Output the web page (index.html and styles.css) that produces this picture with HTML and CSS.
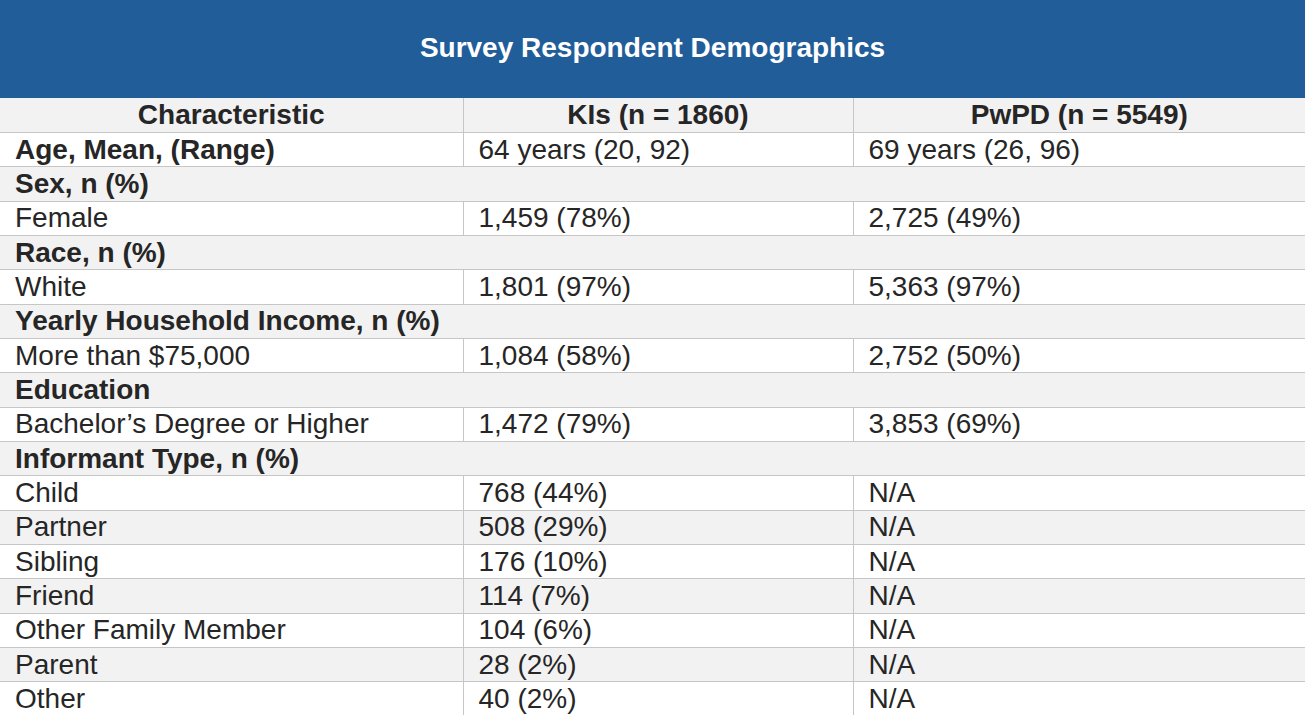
FILE: index.html
```html
<!DOCTYPE html>
<html lang="en">
<head>
<meta charset="utf-8">
<title>Survey Respondent Demographics</title>
<link rel="stylesheet" href="styles.css">
</head>
<body>
<div class="page">
  <header class="banner"><h1 class="banner-title">Survey Respondent Demographics</h1></header>
  <table class="demo">
    <colgroup><col class="c1"><col class="c2"><col class="c3"></colgroup>
    <thead>
      <tr class="head"><th>Characteristic</th><th>KIs (n = 1860)</th><th>PwPD (n = 5549)</th></tr>
    </thead>
    <tbody>
      <tr class="w"><td class="b">Age, Mean, (Range)</td><td>64 years (20, 92)</td><td>69 years (26, 96)</td></tr>
      <tr class="g"><td class="b" colspan="3">Sex, n (%)</td></tr>
      <tr class="w"><td>Female</td><td>1,459 (78%)</td><td>2,725 (49%)</td></tr>
      <tr class="g"><td class="b" colspan="3">Race, n (%)</td></tr>
      <tr class="w"><td>White</td><td>1,801 (97%)</td><td>5,363 (97%)</td></tr>
      <tr class="g"><td class="b" colspan="3">Yearly Household Income, n (%)</td></tr>
      <tr class="w"><td>More than $75,000</td><td>1,084 (58%)</td><td>2,752 (50%)</td></tr>
      <tr class="g"><td class="b" colspan="3">Education</td></tr>
      <tr class="w"><td>Bachelor’s Degree or Higher</td><td>1,472 (79%)</td><td>3,853 (69%)</td></tr>
      <tr class="g"><td class="b" colspan="3">Informant Type, n (%)</td></tr>
      <tr class="w"><td>Child</td><td>768 (44%)</td><td>N/A</td></tr>
      <tr class="g"><td>Partner</td><td>508 (29%)</td><td>N/A</td></tr>
      <tr class="w"><td>Sibling</td><td>176 (10%)</td><td>N/A</td></tr>
      <tr class="g"><td>Friend</td><td>114 (7%)</td><td>N/A</td></tr>
      <tr class="w"><td>Other Family Member</td><td>104 (6%)</td><td>N/A</td></tr>
      <tr class="g"><td>Parent</td><td>28 (2%)</td><td>N/A</td></tr>
      <tr class="w"><td>Other</td><td>40 (2%)</td><td>N/A</td></tr>
    </tbody>
  </table>
</div>
</body>
</html>
```
FILE: styles.css
```css
html, body {
  margin: 0;
  padding: 0;
  background: #ffffff;
}
body {
  font-family: "Liberation Sans", Arial, sans-serif;
  color: #262626;
  overflow: hidden;
}
.page {
  width: 1305px;
}
.banner {
  height: 98px;
  background: #215d99;
  display: flex;
  align-items: center;
  justify-content: center;
}
.banner-title {
  margin: 0;
  color: #ffffff;
  font-size: 28px;
  font-weight: 700;
  line-height: 1;
  transform: translateY(-1px);
}
.demo {
  width: 1305px;
  border-collapse: collapse;
  table-layout: fixed;
  font-size: 28px;
}
.c1 { width: 463px; }
.c2 { width: 390px; }
.c3 { width: 452px; }
.demo th, .demo td {
  height: 34.35px;
  padding: 0 15px;
  border: 1px solid #c6c6c6;
  line-height: 1;
  text-align: left;
  vertical-align: middle;
  white-space: nowrap;
  box-sizing: border-box;
}
.demo td:first-child, .demo th:first-child { border-left: none; }
.demo td:last-child, .demo th:last-child { border-right: none; }
.demo th {
  font-weight: 700;
  text-align: center;
}
.head { background: #f2f2f2; }
.head th { border-top: none; }
.g { background: #f2f2f2; }
.w { background: #ffffff; }
.b { font-weight: 700; }
```
